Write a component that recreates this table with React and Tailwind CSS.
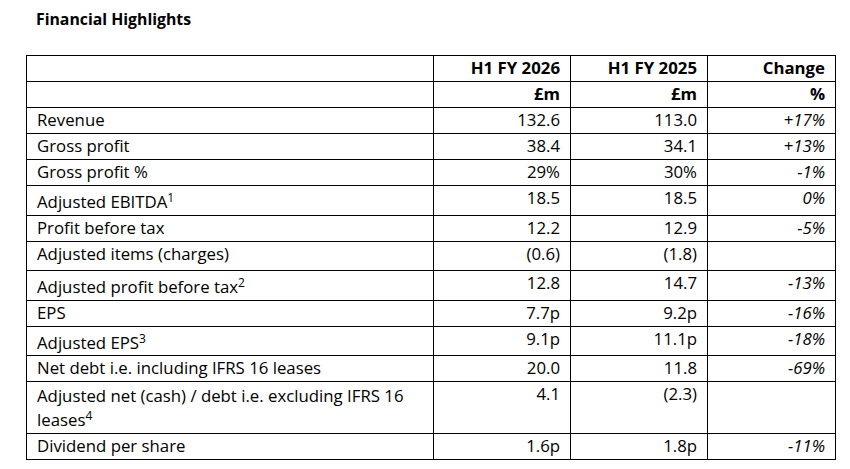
import React from "react";

const rows = [
  { label: "Revenue", a: "132.6", b: "113.0", c: "+17%", h: "h-[26px]" },
  { label: "Gross profit", a: "38.4", b: "34.1", c: "+13%", h: "h-[26px]" },
  { label: "Gross profit %", a: "29%", b: "30%", c: "-1%", h: "h-[26px]" },
  { label: "Adjusted EBITDA", sup: "1", a: "18.5", b: "18.5", c: "0%", h: "h-[30px]" },
  { label: "Profit before tax", a: "12.2", b: "12.9", c: "-5%", h: "h-[26px]" },
  { label: "Adjusted items (charges)", a: "(0.6)", b: "(1.8)", c: "", h: "h-[29px]" },
  { label: "Adjusted profit before tax", sup: "2", a: "12.8", b: "14.7", c: "-13%", h: "h-[30px]" },
  { label: "EPS", a: "7.7p", b: "9.2p", c: "-16%", h: "h-[26px]" },
  { label: "Adjusted EPS", sup: "3", a: "9.1p", b: "11.1p", c: "-18%", h: "h-[29px]" },
  { label: "Net debt i.e. including IFRS 16 leases", a: "20.0", b: "11.8", c: "-69%", h: "h-[26px]" },
  {
    label: "Adjusted net (cash) / debt i.e. excluding IFRS 16 leases",
    sup: "4",
    a: "4.1",
    b: "(2.3)",
    c: "",
    h: "h-[52px]",
    wrap: true,
  },
  { label: "Dividend per share", a: "1.6p", b: "1.8p", c: "-11%", h: "h-[26px]" },
];

const cell = "border border-black align-top px-[10px] pt-[2px] leading-[20px]";

export default function App() {
  return (
    <div className="w-[850px] h-[469px] bg-white text-black font-['Open_Sans',sans-serif] text-[16.8px]">
      <div className="pl-[36px] pt-[9px] font-bold text-[15.8px] leading-[20px]">Financial Highlights</div>

      <table className="ml-[26px] mt-[26px] border-collapse table-fixed w-[810px]">
        <colgroup>
          <col className="w-[407px]" />
          <col className="w-[137px]" />
          <col className="w-[137px]" />
          <col className="w-[128px]" />
        </colgroup>
        <thead>
          <tr className="h-[26px] font-bold">
            <td className={cell}></td>
            <td className={cell + " text-right"}>H1 FY 2026</td>
            <td className={cell + " text-right"}>H1 FY 2025</td>
            <td className={cell + " text-right"}>Change</td>
          </tr>
          <tr className="h-[26px] font-bold">
            <td className={cell}></td>
            <td className={cell + " text-right"}>£m</td>
            <td className={cell + " text-right"}>£m</td>
            <td className={cell + " text-right"}>%</td>
          </tr>
        </thead>
        <tbody>
          {rows.map((r) => (
            <tr key={r.label} className={r.h}>
              <td
                className={
                  cell + (r.wrap ? " leading-[24px] pt-[1px]" : r.sup ? " pt-[6px]" : "")
                }
              >
                {r.label}
                {r.sup && (
                  <span className="relative -top-[6px] text-[12px] leading-none">{r.sup}</span>
                )}
              </td>
              <td className={cell + " text-right"}>{r.a}</td>
              <td className={cell + " text-right"}>{r.b}</td>
              <td className={cell + " text-right italic"}>{r.c}</td>
            </tr>
          ))}
        </tbody>
      </table>
    </div>
  );
}
